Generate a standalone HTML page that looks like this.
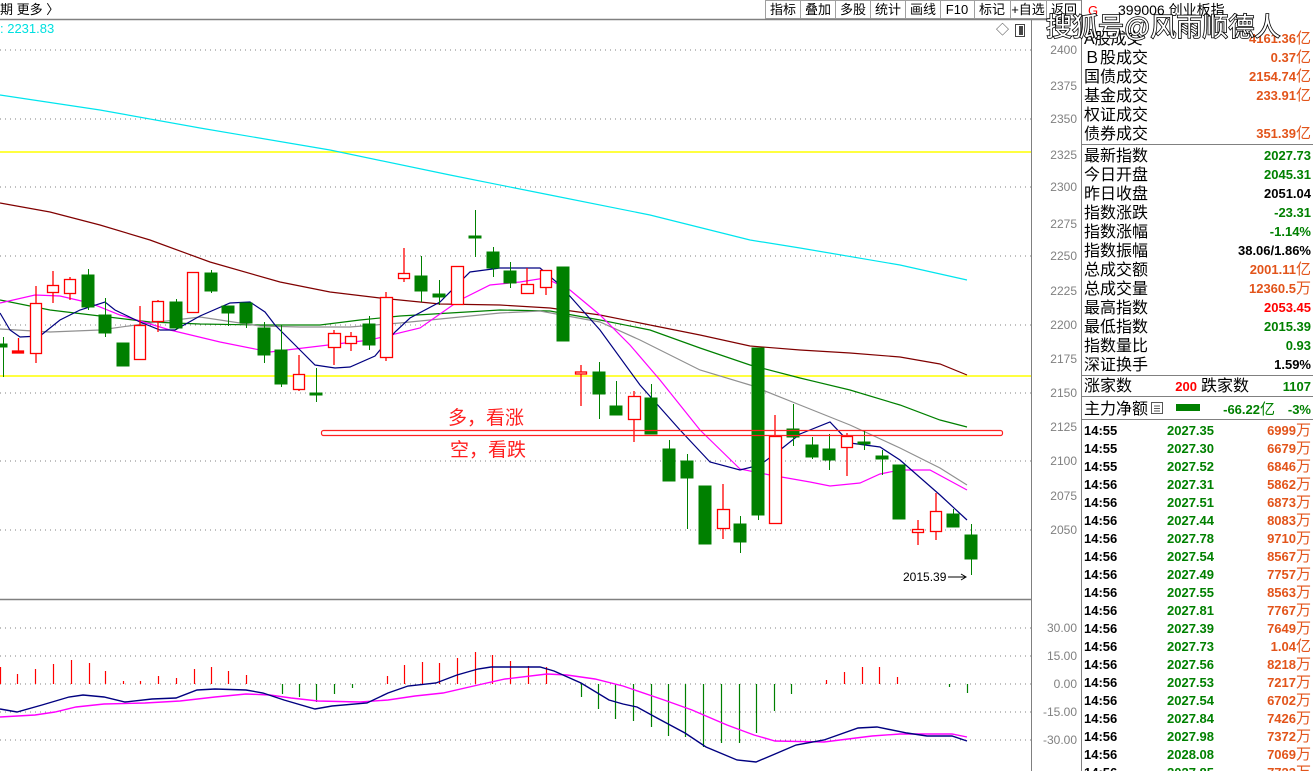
<!DOCTYPE html>
<html><head><meta charset="utf-8"><style>
html,body{margin:0;padding:0;background:#fff;width:1313px;height:771px;overflow:hidden}
svg{display:block;font-family:"Liberation Sans","Noto Sans CJK SC",sans-serif}
.l{font-size:16px;fill:#000}
.n{font-size:13px;font-weight:bold}
.o{fill:#e2541a}.g{fill:#008000}.r{fill:#ff0000}.k{fill:#000}
.ax{font-size:12px;fill:#808080}
.btn{font-size:13px;fill:#000}
</style></head><body>
<svg width="1313" height="771" viewBox="0 0 1313 771">
<text x="0" y="14" class="btn">期  更多 〉</text>
<g fill="none" stroke="#a0a0a0">
<rect x="765.5" y="0.5" width="35" height="18"/><rect x="800.5" y="0.5" width="35" height="18"/><rect x="835.5" y="0.5" width="35" height="18"/><rect x="870.5" y="0.5" width="35" height="18"/><rect x="905.5" y="0.5" width="35" height="18"/><rect x="940.5" y="0.5" width="34" height="18"/><rect x="974.5" y="0.5" width="36" height="18"/><rect x="1010.5" y="0.5" width="36" height="18"/><rect x="1046.5" y="0.5" width="35" height="18"/>
</g>
<g class="btn" text-anchor="middle">
<text x="783" y="14">指标</text><text x="818" y="14">叠加</text><text x="853" y="14">多股</text><text x="888" y="14">统计</text><text x="923" y="14">画线</text><text x="957" y="14">F10</text><text x="992" y="14">标记</text><text x="1028" y="14">+自选</text><text x="1064" y="14">返回</text>
</g>
<line x1="0" y1="19.5" x2="1081" y2="19.5" stroke="#808080" stroke-width="1.5"/>
<text x="0" y="33" font-size="13" fill="#00e0e0">: 2231.83</text>
<text x="996" y="34" font-size="13" fill="#444">◇</text>
<rect x="1015.5" y="24.5" width="9" height="12" fill="none" stroke="#444"/><rect x="1019" y="26" width="4" height="9" fill="#444"/>

<line x1="1031.5" y1="20" x2="1031.5" y2="771" stroke="#808080"/>
<line x1="1081.5" y1="0" x2="1081.5" y2="771" stroke="#808080"/>
<line x1="0" y1="599.5" x2="1031" y2="599.5" stroke="#808080" stroke-width="1.5"/>

<g stroke="#808080" stroke-dasharray="1,4">
<line x1="0" y1="50" x2="1031" y2="50"/><line x1="0" y1="119" x2="1031" y2="119"/><line x1="0" y1="187" x2="1031" y2="187"/><line x1="0" y1="256" x2="1031" y2="256"/><line x1="0" y1="325" x2="1031" y2="325"/><line x1="0" y1="393" x2="1031" y2="393"/><line x1="0" y1="461" x2="1031" y2="461"/><line x1="0" y1="530" x2="1031" y2="530"/>
<line x1="0" y1="628" x2="1031" y2="628"/><line x1="0" y1="656" x2="1031" y2="656"/><line x1="0" y1="684" x2="1031" y2="684"/><line x1="0" y1="712" x2="1031" y2="712"/><line x1="0" y1="740" x2="1031" y2="740"/>
</g>
<g class="ax" text-anchor="end">
<text x="1077" y="54">2400</text><text x="1077" y="90">2375</text><text x="1077" y="123">2350</text><text x="1077" y="159">2325</text><text x="1077" y="191">2300</text><text x="1077" y="228">2275</text><text x="1077" y="260">2250</text><text x="1077" y="295">2225</text><text x="1077" y="329">2200</text><text x="1077" y="363">2175</text><text x="1077" y="397">2150</text><text x="1077" y="431">2125</text><text x="1077" y="465">2100</text><text x="1077" y="500">2075</text><text x="1077" y="534">2050</text>
<text x="1077" y="632">30.00</text><text x="1077" y="660">15.00</text><text x="1077" y="688">0.00</text><text x="1077" y="716">-15.00</text><text x="1077" y="744">-30.00</text>
</g>

<line x1="0" y1="152" x2="1031" y2="152" stroke="#ffff00" stroke-width="1.5"/>
<line x1="0" y1="376" x2="1031" y2="376" stroke="#ffff00" stroke-width="1.5"/>

<g fill="none" stroke-width="1.2">
<polyline stroke="#00e5ee" points="0,95 100,110 200,128 330,150 450,175 550,195 650,215 750,240 800,248 900,265 967,280"/>
<polyline stroke="#800000" points="0,203 50,212 100,225 150,240 210,262 280,282 330,292 380,298 440,304 500,305 550,308 600,315 650,325 700,335 750,346 800,350 850,353 900,357 940,364 967,375"/>
<polyline stroke="#008000" points="0,300 50,310 100,316 150,322 200,324 260,325 320,325 360,320 400,316 450,313 500,310 550,311 600,320 650,330 700,348 750,365 800,378 850,390 900,405 940,420 967,427"/>
<polyline stroke="#909090" points="0,329 50,332 100,330 150,323 200,317 260,326 300,327 350,327 400,323 450,318 500,313 540,311 600,322 640,340 700,370 750,385 800,405 850,425 900,448 940,468 967,485"/>
<polyline stroke="#ff00ff" points="0,303 35,295 60,296 90,303 120,315 150,324 170,330 220,342 270,352 320,346 370,340 420,328 460,300 490,285 520,282 545,278 570,290 600,315 630,345 660,380 700,430 740,469 770,475 810,482 830,486 860,483 880,474 900,470 930,470 967,490"/>
<polyline stroke="#000080" points="0,313 10,330 20,337 40,336 60,320 80,310 105,302 115,310 140,322 160,330 175,330 200,316 230,303 250,302 265,312 275,325 300,350 315,365 335,368 350,367 375,356 395,332 410,318 440,302 470,272 500,268 540,268 560,285 600,330 640,385 680,430 710,462 740,470 760,465 780,450 800,434 830,422 850,443 880,447 900,460 940,495 967,520"/>
</g>

<g>
<g stroke="#008000" fill="#008000">
<line x1="3.5" y1="337" x2="3.5" y2="377"/><rect x="0" y="344" width="7" height="3"/>
<line x1="88.5" y1="269" x2="88.5" y2="310"/><rect x="82" y="275" width="12" height="32"/>
<line x1="105.5" y1="298" x2="105.5" y2="337"/><rect x="99" y="315" width="12" height="18"/>
<rect x="117" y="343" width="12" height="23"/>
<line x1="176.5" y1="299" x2="176.5" y2="330"/><rect x="170" y="302" width="12" height="26"/>
<line x1="211.5" y1="270" x2="211.5" y2="293"/><rect x="205" y="273" width="12" height="18"/>
<line x1="228.5" y1="306" x2="228.5" y2="326"/><rect x="222" y="306" width="12" height="7"/>
<line x1="246.5" y1="303" x2="246.5" y2="328"/><rect x="240" y="303" width="12" height="20"/>
<line x1="264.5" y1="322" x2="264.5" y2="363"/><rect x="258" y="328" width="12" height="27"/>
<line x1="281.5" y1="325" x2="281.5" y2="387"/><rect x="275" y="350" width="12" height="34"/>
<line x1="316.5" y1="368" x2="316.5" y2="402"/><rect x="310" y="393" width="12" height="2"/>
<line x1="369.5" y1="316" x2="369.5" y2="350"/><rect x="363" y="324" width="12" height="21"/>
<line x1="421.5" y1="256" x2="421.5" y2="302"/><rect x="415" y="276" width="12" height="15"/>
<line x1="439.5" y1="280" x2="439.5" y2="305"/><rect x="433" y="294" width="12" height="3"/>
<line x1="475.5" y1="210" x2="475.5" y2="257"/><rect x="469" y="236" width="12" height="2"/>
<line x1="493.5" y1="247" x2="493.5" y2="277"/><rect x="487" y="252" width="12" height="16"/>
<line x1="510.5" y1="262" x2="510.5" y2="288"/><rect x="504" y="271" width="12" height="12"/>
<rect x="557" y="267" width="12" height="74"/>
<line x1="599.5" y1="362" x2="599.5" y2="419"/><rect x="593" y="372" width="12" height="22"/>
<line x1="616.5" y1="381" x2="616.5" y2="415"/><rect x="610" y="406" width="12" height="9"/>
<line x1="651.5" y1="384" x2="651.5" y2="434"/><rect x="645" y="398" width="12" height="36"/>
<line x1="669.5" y1="440" x2="669.5" y2="481"/><rect x="663" y="449" width="12" height="32"/>
<line x1="687.5" y1="454" x2="687.5" y2="529"/><rect x="681" y="461" width="12" height="17"/>
<rect x="699" y="486" width="12" height="58"/>
<line x1="740.5" y1="516" x2="740.5" y2="553"/><rect x="734" y="524" width="12" height="18"/>
<line x1="758.5" y1="348" x2="758.5" y2="520"/><rect x="752" y="348" width="12" height="167"/>
<line x1="793.5" y1="404" x2="793.5" y2="446"/><rect x="787" y="429" width="12" height="8"/>
<line x1="812.5" y1="437" x2="812.5" y2="459"/><rect x="806" y="445" width="12" height="12"/>
<line x1="829.5" y1="434" x2="829.5" y2="470"/><rect x="823" y="449" width="12" height="11"/>
<line x1="864.5" y1="430" x2="864.5" y2="450"/><rect x="858" y="442" width="12" height="2"/>
<line x1="882.5" y1="450" x2="882.5" y2="475"/><rect x="876" y="456" width="12" height="3"/>
<rect x="893" y="465" width="12" height="54"/>
<line x1="953.5" y1="509" x2="953.5" y2="527"/><rect x="947" y="514" width="12" height="13"/>
<line x1="971.5" y1="524" x2="971.5" y2="575"/><rect x="965" y="535" width="12" height="24"/>
</g>
<g stroke="#ff0000" fill="#fff" stroke-width="1.3">
<line x1="18.5" y1="338" x2="18.5" y2="352"/><rect x="12.5" y="351" width="11" height="2" fill="#ff0000"/>
<line x1="36" y1="286" x2="36" y2="363"/><rect x="30.5" y="303.5" width="11" height="50"/>
<line x1="53" y1="271" x2="53" y2="303"/><rect x="47.5" y="285.5" width="11" height="7"/>
<line x1="70" y1="277" x2="70" y2="300"/><rect x="64.5" y="279.5" width="11" height="14"/>
<line x1="140" y1="306" x2="140" y2="359"/><rect x="134.5" y="325.5" width="11" height="34"/>
<line x1="158" y1="300" x2="158" y2="332"/><rect x="152.5" y="301.5" width="11" height="20"/>
<rect x="187.5" y="272.5" width="11" height="40"/>
<line x1="299" y1="355" x2="299" y2="391"/><rect x="293.5" y="374.5" width="11" height="15"/>
<line x1="334" y1="330" x2="334" y2="365"/><rect x="328.5" y="333.5" width="12" height="14"/>
<line x1="351" y1="332" x2="351" y2="351"/><rect x="345.5" y="336.5" width="11" height="7"/>
<line x1="386" y1="292" x2="386" y2="361"/><rect x="380.5" y="297.5" width="12" height="60"/>
<line x1="404" y1="248" x2="404" y2="282"/><rect x="398.5" y="273.5" width="11" height="5"/>
<rect x="451.5" y="266.5" width="12" height="38"/>
<line x1="527" y1="268" x2="527" y2="293"/><rect x="521.5" y="284.5" width="12" height="9"/>
<line x1="546" y1="270" x2="546" y2="295"/><rect x="540.5" y="270.5" width="11" height="17"/>
<line x1="581" y1="365" x2="581" y2="406"/><rect x="575.5" y="372" width="11" height="2"/>
<line x1="634" y1="391" x2="634" y2="442"/><rect x="628.5" y="396.5" width="12" height="23"/>
<line x1="723" y1="484" x2="723" y2="539"/><rect x="717.5" y="509.5" width="12" height="19"/>
<line x1="775" y1="415" x2="775" y2="523"/><rect x="769.5" y="436.5" width="12" height="87"/>
<line x1="847" y1="433" x2="847" y2="476"/><rect x="841.5" y="436.5" width="11" height="11"/>
<line x1="918" y1="520" x2="918" y2="545"/><rect x="912.5" y="529.5" width="11" height="3"/>
<line x1="936" y1="493" x2="936" y2="540"/><rect x="930.5" y="511.5" width="11" height="20"/>
</g>
</g>

<rect x="321.5" y="430.5" width="681" height="5" rx="2" fill="none" stroke="#ff2020" stroke-width="1.2"/>
<text x="448" y="424" font-size="19" fill="#ff2020">多，看涨</text>
<text x="450" y="456" font-size="19" fill="#ff2020">空，看跌</text>
<text x="903" y="581" font-size="12" fill="#000">2015.39</text>
<line x1="948" y1="577" x2="965" y2="577" stroke="#000"/><path d="M961,574 L966,577 L961,580" fill="none" stroke="#000"/>

<g stroke="#ff0000" stroke-width="1.2">
<line x1="0.5" y1="667" x2="0.5" y2="684"/><line x1="17.5" y1="674" x2="17.5" y2="684"/><line x1="35.5" y1="669" x2="35.5" y2="684"/><line x1="53.5" y1="664" x2="53.5" y2="684"/><line x1="71.5" y1="660" x2="71.5" y2="684"/><line x1="89.5" y1="663" x2="89.5" y2="684"/><line x1="105.5" y1="671" x2="105.5" y2="684"/><line x1="123.5" y1="681" x2="123.5" y2="684"/><line x1="140.5" y1="681" x2="140.5" y2="684"/><line x1="158.5" y1="676" x2="158.5" y2="684"/><line x1="176.5" y1="678" x2="176.5" y2="684"/><line x1="194.5" y1="669" x2="194.5" y2="684"/><line x1="211.5" y1="667" x2="211.5" y2="684"/><line x1="228.5" y1="671" x2="228.5" y2="684"/><line x1="246.5" y1="675" x2="246.5" y2="684"/>
<line x1="387.5" y1="676" x2="387.5" y2="684"/><line x1="404.5" y1="665" x2="404.5" y2="684"/><line x1="422.5" y1="662" x2="422.5" y2="684"/><line x1="439.5" y1="663" x2="439.5" y2="684"/><line x1="457.5" y1="658" x2="457.5" y2="684"/><line x1="475.5" y1="652" x2="475.5" y2="684"/><line x1="492.5" y1="655" x2="492.5" y2="684"/><line x1="510.5" y1="661" x2="510.5" y2="684"/><line x1="528.5" y1="666" x2="528.5" y2="684"/><line x1="546.5" y1="667" x2="546.5" y2="684"/>
<line x1="826.5" y1="680" x2="826.5" y2="684"/><line x1="844.5" y1="672" x2="844.5" y2="684"/><line x1="862.5" y1="667" x2="862.5" y2="684"/><line x1="879.5" y1="667" x2="879.5" y2="684"/><line x1="897.5" y1="677" x2="897.5" y2="684"/>
</g>
<g stroke="#008000" stroke-width="1.2">
<line x1="282.5" y1="684" x2="282.5" y2="694"/><line x1="299.5" y1="684" x2="299.5" y2="697"/><line x1="316.5" y1="684" x2="316.5" y2="702"/><line x1="334.5" y1="684" x2="334.5" y2="694"/><line x1="352.5" y1="684" x2="352.5" y2="688"/>
<line x1="581.5" y1="684" x2="581.5" y2="697"/><line x1="598.5" y1="684" x2="598.5" y2="709"/><line x1="615.5" y1="684" x2="615.5" y2="719"/><line x1="633.5" y1="684" x2="633.5" y2="721"/><line x1="651.5" y1="684" x2="651.5" y2="727"/><line x1="668.5" y1="684" x2="668.5" y2="736"/><line x1="685.5" y1="684" x2="685.5" y2="737"/><line x1="703.5" y1="684" x2="703.5" y2="747"/><line x1="721.5" y1="684" x2="721.5" y2="743"/><line x1="739.5" y1="684" x2="739.5" y2="743"/><line x1="756.5" y1="684" x2="756.5" y2="733"/><line x1="774.5" y1="684" x2="774.5" y2="711"/><line x1="791.5" y1="684" x2="791.5" y2="694"/>
<line x1="949.5" y1="684" x2="949.5" y2="687"/><line x1="967.5" y1="684" x2="967.5" y2="693"/>
</g>
<g fill="none" stroke-width="1.4">
<polyline stroke="#ff00ff" points="0,717 35,715 55,712 76,707 104,704 145,703 180,701 215,697 246,694 270,695 291,698 318,701 360,702 388,700 415,696 443,693 478,685 505,679 547,674 567,675 595,679 623,686 664,700 692,710 727,725 754,735 775,741 824,742 872,736 900,734 952,734 967,737"/>
<polyline stroke="#000080" points="0,709 17,712 42,705 69,697 83,695 104,697 125,702 152,699 176,698 197,690 215,689 246,690 263,693 284,700 315,709 332,706 367,703 388,693 408,686 436,683 457,675 478,669 491,667 540,667 554,671 581,683 609,700 623,704 637,707 657,718 685,733 706,747 737,760 756,762 775,754 796,745 824,740 858,728 877,727 907,733 927,736 952,736 967,741"/>
</g>

<text x="1088" y="15" font-size="13" fill="#ff0000">G</text>
<text x="1118" y="15" font-size="14" fill="#000">399006 创业板指</text>
<g stroke="#808080">
<line x1="1081" y1="144.5" x2="1313" y2="144.5"/><line x1="1081" y1="375.5" x2="1313" y2="375.5"/><line x1="1081" y1="396.5" x2="1313" y2="396.5"/><line x1="1081" y1="419.5" x2="1313" y2="419.5"/>
</g>
<g class="l">
<text x="1084" y="44">A股成交</text><text x="1084" y="63">Ｂ股成交</text><text x="1084" y="82">国债成交</text><text x="1084" y="101">基金成交</text><text x="1084" y="120">权证成交</text><text x="1084" y="139">债券成交</text>
<text x="1084" y="161">最新指数</text><text x="1084" y="180">今日开盘</text><text x="1084" y="199">昨日收盘</text><text x="1084" y="218">指数涨跌</text><text x="1084" y="237">指数涨幅</text><text x="1084" y="256">指数振幅</text><text x="1084" y="275">总成交额</text><text x="1084" y="294">总成交量</text><text x="1084" y="313">最高指数</text><text x="1084" y="332">最低指数</text><text x="1084" y="351">指数量比</text><text x="1084" y="370">深证换手</text>
<text x="1084" y="391">涨家数</text><text x="1201" y="391">跌家数</text>
<text x="1084" y="414">主力净额</text>
</g>
<g text-anchor="end" class="n">
<text x="1311" y="43" class="o">4161.36<tspan font-size="15" font-weight="normal">亿</tspan></text>
<text x="1311" y="62" class="o">0.37<tspan font-size="15" font-weight="normal">亿</tspan></text>
<text x="1311" y="81" class="o">2154.74<tspan font-size="15" font-weight="normal">亿</tspan></text>
<text x="1311" y="100" class="o">233.91<tspan font-size="15" font-weight="normal">亿</tspan></text>
<text x="1311" y="138" class="o">351.39<tspan font-size="15" font-weight="normal">亿</tspan></text>
<text x="1311" y="160" class="g">2027.73</text>
<text x="1311" y="179" class="g">2045.31</text>
<text x="1311" y="198" class="k">2051.04</text>
<text x="1311" y="217" class="g">-23.31</text>
<text x="1311" y="236" class="g">-1.14%</text>
<text x="1311" y="255" class="k">38.06/1.86%</text>
<text x="1311" y="274" class="o">2001.11<tspan font-size="15" font-weight="normal">亿</tspan></text>
<text x="1311" y="293" class="o">12360.5<tspan font-size="15" font-weight="normal">万</tspan></text>
<text x="1311" y="312" class="r">2053.45</text>
<text x="1311" y="331" class="g">2015.39</text>
<text x="1311" y="350" class="g">0.93</text>
<text x="1311" y="369" class="k">1.59%</text>
<text x="1197" y="391" class="r">200</text>
<text x="1311" y="391" class="g">1107</text>
<text x="1275" y="414" class="g">-66.22<tspan font-size="15" font-weight="normal">亿</tspan></text>
<text x="1311" y="414" class="g">-3%</text>
</g>
<rect x="1151.5" y="402.5" width="11" height="11" fill="none" stroke="#555"/><path d="M1154,406h6M1154,408.5h6M1154,411h6" stroke="#555"/>
<rect x="1176" y="404" width="24" height="7" fill="#008000"/>

<g class="n">
<g class="k"><text x="1084" y="435">14:55</text><text x="1084" y="453">14:55</text><text x="1084" y="471">14:55</text><text x="1084" y="489">14:56</text><text x="1084" y="507">14:56</text><text x="1084" y="525">14:56</text><text x="1084" y="543">14:56</text><text x="1084" y="561">14:56</text><text x="1084" y="579">14:56</text><text x="1084" y="597">14:56</text><text x="1084" y="615">14:56</text><text x="1084" y="633">14:56</text><text x="1084" y="651">14:56</text><text x="1084" y="669">14:56</text><text x="1084" y="687">14:56</text><text x="1084" y="705">14:56</text><text x="1084" y="723">14:56</text><text x="1084" y="741">14:56</text><text x="1084" y="759">14:56</text><text x="1084" y="777">14:56</text></g>
<g class="g" text-anchor="end"><text x="1214" y="435">2027.35</text><text x="1214" y="453">2027.30</text><text x="1214" y="471">2027.52</text><text x="1214" y="489">2027.31</text><text x="1214" y="507">2027.51</text><text x="1214" y="525">2027.44</text><text x="1214" y="543">2027.78</text><text x="1214" y="561">2027.54</text><text x="1214" y="579">2027.49</text><text x="1214" y="597">2027.55</text><text x="1214" y="615">2027.81</text><text x="1214" y="633">2027.39</text><text x="1214" y="651">2027.73</text><text x="1214" y="669">2027.56</text><text x="1214" y="687">2027.53</text><text x="1214" y="705">2027.54</text><text x="1214" y="723">2027.84</text><text x="1214" y="741">2027.98</text><text x="1214" y="759">2028.08</text><text x="1214" y="777">2027.85</text></g>
<g class="o" text-anchor="end">
<text x="1311" y="435">6999<tspan font-size="15" font-weight="normal">万</tspan></text><text x="1311" y="453">6679<tspan font-size="15" font-weight="normal">万</tspan></text><text x="1311" y="471">6846<tspan font-size="15" font-weight="normal">万</tspan></text><text x="1311" y="489">5862<tspan font-size="15" font-weight="normal">万</tspan></text><text x="1311" y="507">6873<tspan font-size="15" font-weight="normal">万</tspan></text><text x="1311" y="525">8083<tspan font-size="15" font-weight="normal">万</tspan></text><text x="1311" y="543">9710<tspan font-size="15" font-weight="normal">万</tspan></text><text x="1311" y="561">8567<tspan font-size="15" font-weight="normal">万</tspan></text><text x="1311" y="579">7757<tspan font-size="15" font-weight="normal">万</tspan></text><text x="1311" y="597">8563<tspan font-size="15" font-weight="normal">万</tspan></text><text x="1311" y="615">7767<tspan font-size="15" font-weight="normal">万</tspan></text><text x="1311" y="633">7649<tspan font-size="15" font-weight="normal">万</tspan></text><text x="1311" y="651">1.04<tspan font-size="15" font-weight="normal">亿</tspan></text><text x="1311" y="669">8218<tspan font-size="15" font-weight="normal">万</tspan></text><text x="1311" y="687">7217<tspan font-size="15" font-weight="normal">万</tspan></text><text x="1311" y="705">6702<tspan font-size="15" font-weight="normal">万</tspan></text><text x="1311" y="723">7426<tspan font-size="15" font-weight="normal">万</tspan></text><text x="1311" y="741">7372<tspan font-size="15" font-weight="normal">万</tspan></text><text x="1311" y="759">7069<tspan font-size="15" font-weight="normal">万</tspan></text><text x="1311" y="777">7723<tspan font-size="15" font-weight="normal">万</tspan></text>
</g>
</g>

<text x="1046" y="36" font-size="26" fill="#fff" stroke="#000" stroke-width="1.6" paint-order="stroke" font-family="'Liberation Sans','Noto Sans CJK SC',sans-serif">搜狐号@风雨顺德人</text>
</svg>
</body></html>
